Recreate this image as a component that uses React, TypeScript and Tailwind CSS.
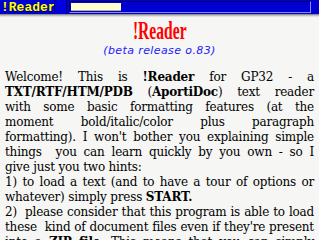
import React from "react";

const J = ({ children }: { children: React.ReactNode }) => (
  <div className="whitespace-pre text-justify [text-align-last:justify]">{children}</div>
);
const L = ({ children }: { children: React.ReactNode }) => (
  <div className="whitespace-pre text-left">{children}</div>
);

export default function App() {
  return (
    <div className="w-[319px] h-[240px] overflow-hidden bg-[#f6f6f4] relative">
      {/* top bar */}
      <div className="h-[14px] bg-[#0000d0] flex items-stretch">
        <div className="w-[54px] flex items-center pl-[1px]">
          <span
            className="text-[#ffff00] text-[13px] leading-none font-bold"
            style={{ fontFamily: '"Liberation Mono", monospace', textShadow: "1px 1px 0 #000060" }}
          >
            !Reader
          </span>
        </div>
        <div className="w-[1px] bg-[#000070]" />
        <div className="w-[11px] bg-[#0000e0]" />
        <div className="w-[1px] bg-[#000070]" />
        <div className="w-[2px]" />
        <div className="flex-1 my-[1px] mr-[8px] border-t border-l border-[#000060] border-r border-b border-r-[#8888ff] border-b-[#8888ff] p-[1px] flex">
          <div className="w-[50px] bg-[#ffffcc] border-b border-[#c0b080]" />
        </div>
      </div>
      <div className="h-[1px] bg-[#909090]" />
      <div className="h-[1px] bg-[#c0c0c0]" />
      <div className="h-[1px] bg-[#e0e0e0]" />

      {/* title */}
      <div className="flex flex-col items-center mt-[1px]">
        <div
          className="text-[#ff0000] text-[26px] leading-[25px] font-bold"
          style={{ fontFamily: '"Liberation Serif", serif', transform: "scaleX(0.6)" }}
        >
          !Reader
        </div>
        <div
          className="text-[#2020ff] text-[11px] leading-[13px] italic mt-[1px]"
          style={{ fontFamily: '"DejaVu Sans", sans-serif', letterSpacing: "0.4px" }}
        >
          (beta release o.83)
        </div>
      </div>

      {/* body */}
      <div
        className="px-[5px] mt-[13px] text-black text-[12px] leading-[15px]"
        style={{ fontFamily: '"DejaVu Serif", serif', letterSpacing: "-0.2px" }}
      >
        <J>Welcome! This is <b>!Reader</b> for GP32 - a</J>
        <J><b>TXT/RTF/HTM/PDB</b> (<b>AportiDoc</b>) text reader</J>
        <J>with some basic formatting features (at the</J>
        <J>moment bold/italic/color plus paragraph</J>
        <J>formatting). I won't bother you explaining simple</J>
        <J>things  you can learn quickly by you own - so I</J>
        <L>give just you two hints:</L>
        <J>1) to load a text (and to have a tour of options or</J>
        <L>whatever) simply press <b>START.</b></L>
        <J>2)  please consider that this program is able to load</J>
        <J>these  kind of document files even if they're present</J>
        <J>into a <b>ZIP file</b>. This means that you can simply</J>
      </div>
    </div>
  );
}
